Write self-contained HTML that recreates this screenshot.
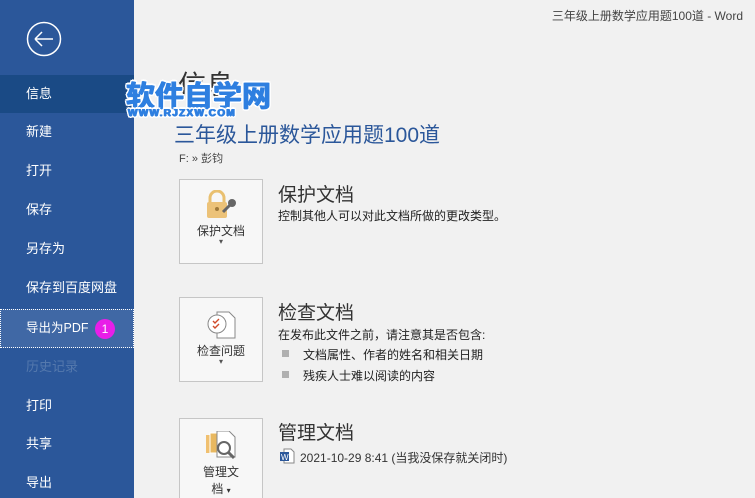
<!DOCTYPE html>
<html><head><meta charset="utf-8"><style>
html,body{margin:0;width:755px;height:498px;overflow:hidden}
body{background:#f1f1f1;font-family:"Liberation Sans","Noto Sans CJK SC",sans-serif;position:relative}
.side{position:absolute;left:0;top:0;width:134px;height:498px;background:#2b579a}
.it{position:absolute;left:0;width:134px;height:38px;line-height:38px;color:#fff;font-size:13px;text-indent:26px}
.t{position:absolute;white-space:nowrap}
.box{position:absolute;left:179px;width:82px;height:83px;border:1px solid #c6c6c6;background:#f7f7f7}
.bl{position:absolute;width:100%;text-align:center;font-size:12px;color:#333}
.h{font-size:19px;color:#333}
.p{font-size:12px;color:#222}
.sq{position:absolute;width:7px;height:7px;background:#b0b0b0}
.wm{color:#2e7fe0;text-shadow:0.6px 0 0 #2e7fe0,-0.6px 0 0 #2e7fe0,0 0.6px 0 #2e7fe0,2px 0 0 #fff,-2px 0 0 #fff,0 2px 0 #fff,0 -2px 0 #fff,1.5px 1.5px 0 #fff,-1.5px -1.5px 0 #fff,1.5px -1.5px 0 #fff,-1.5px 1.5px 0 #fff}
</style></head><body>
<div class="side">
<svg style="position:absolute;left:26px;top:21px" width="36" height="36"><circle cx="18" cy="18" r="16.5" fill="none" stroke="#fff" stroke-width="1.5"/><path d="M9 18H27M9 18L16 11M9 18L16 25" stroke="#fff" stroke-width="1.5" fill="none"/></svg>
<div class="it" style="top:75px;background:#1a4a85">信息</div>
<div class="it" style="top:113px">新建</div>
<div class="it" style="top:152px">打开</div>
<div class="it" style="top:191px">保存</div>
<div class="it" style="top:230px">另存为</div>
<div class="it" style="top:269px">保存到百度网盘</div>
<div class="it" style="top:309px;height:39px;background:#4068a5;outline:1px dotted #fff;outline-offset:-1px"><span style="font-size:12.5px">导出为PDF</span><span style="position:absolute;left:95px;top:10px;width:20px;height:20px;border-radius:50%;background:#e81ee8;line-height:20px;text-indent:0;text-align:center;font-size:12px">1</span></div>
<div class="it" style="top:348px;color:#5579ad">历史记录</div>
<div class="it" style="top:387px">打印</div>
<div class="it" style="top:425px">共享</div>
<div class="it" style="top:464px">导出</div>
</div>
<div class="t" style="right:12px;top:7px;font-size:12px;color:#444">三年级上册数学应用题100道 - Word</div>
<div class="t" style="left:178px;top:64px;font-size:28px;color:#333">信息</div>
<div class="t wm" style="left:126px;top:73px;font-size:29px;font-weight:bold;letter-spacing:0px">软件自学网</div>
<div class="t wm" style="left:128px;top:108px;font-size:10px;font-weight:bold;letter-spacing:1.3px">WWW.RJZXW.COM</div>
<div class="t" style="left:174px;top:119px;font-size:21px;color:#2b579a">三年级上册数学应用题100道</div>
<div class="t" style="left:179px;top:150px;font-size:11px;color:#444">F: » 彭钧</div>

<div class="box" style="top:179px">
<svg style="position:absolute;left:25px;top:10px" width="34" height="30"><path d="M5 12V8a7 7 0 0 1 14 0v4" fill="none" stroke="#e9c070" stroke-width="3"/><rect x="2" y="12" width="20" height="16" rx="2" fill="#ecc278"/><circle cx="12" cy="19" r="2" fill="#a07a3a"/><path d="M18 22l8-8" stroke="#666" stroke-width="3"/><circle cx="27" cy="13" r="4" fill="#666"/></svg>
<div class="bl" style="top:42px">保护文档</div><div class="bl" style="top:57px;font-size:8px;color:#555">▾</div></div>
<div class="t h" style="left:278px;top:180px">保护文档</div>
<div class="t p" style="left:278px;top:207px">控制其他人可以对此文档所做的更改类型。</div>

<div class="box" style="top:297px">
<svg style="position:absolute;left:25px;top:12px" width="34" height="30"><path d="M12 2h12l6 6v20H12z" fill="#fff" stroke="#888"/><circle cx="12" cy="14" r="9" fill="#fff" stroke="#888"/><path d="M8 11l2 2 4-4M8 16l2 2 4-4" stroke="#d04a2a" fill="none" stroke-width="1.4"/></svg>
<div class="bl" style="top:44px">检查问题</div><div class="bl" style="top:59px;font-size:8px;color:#555">▾</div></div>
<div class="t h" style="left:278px;top:298px">检查文档</div>
<div class="t p" style="left:278px;top:326px">在发布此文件之前，请注意其是否包含:</div>
<div class="sq" style="left:282px;top:350px"></div><div class="t p" style="left:303px;top:346px">文档属性、作者的姓名和相关日期</div>
<div class="sq" style="left:282px;top:371px"></div><div class="t p" style="left:303px;top:367px">残疾人士难以阅读的内容</div>

<div class="box" style="top:418px;height:90px">
<svg style="position:absolute;left:25px;top:12px" width="34" height="34"><rect x="1" y="4" width="14" height="18" fill="#f0c070"/><rect x="5" y="2" width="14" height="20" fill="#e8b860" stroke="#fff"/><path d="M12 0h12l6 6v20H12z" fill="#fff" stroke="#888"/><circle cx="19" cy="17" r="6" fill="#fff" stroke="#666" stroke-width="2"/><path d="M23 21l6 6" stroke="#666" stroke-width="3"/></svg>
<div class="bl" style="top:44px">管理文<br>档 <span style="font-size:8px">▾</span></div></div>
<div class="t h" style="left:278px;top:418px">管理文档</div>
<svg style="position:absolute;left:279px;top:448px" width="16" height="16"><path d="M5 1h7l3 3v11H5z" fill="#fff" stroke="#888"/><rect x="1" y="4" width="9" height="9" fill="#2b579a"/><text x="2" y="12" font-size="8" fill="#fff" font-family="Liberation Sans">W</text></svg>
<div class="t p" style="left:300px;top:449px;color:#333">2021-10-29 8:41 (当我没保存就关闭时)</div>
</body></html>
